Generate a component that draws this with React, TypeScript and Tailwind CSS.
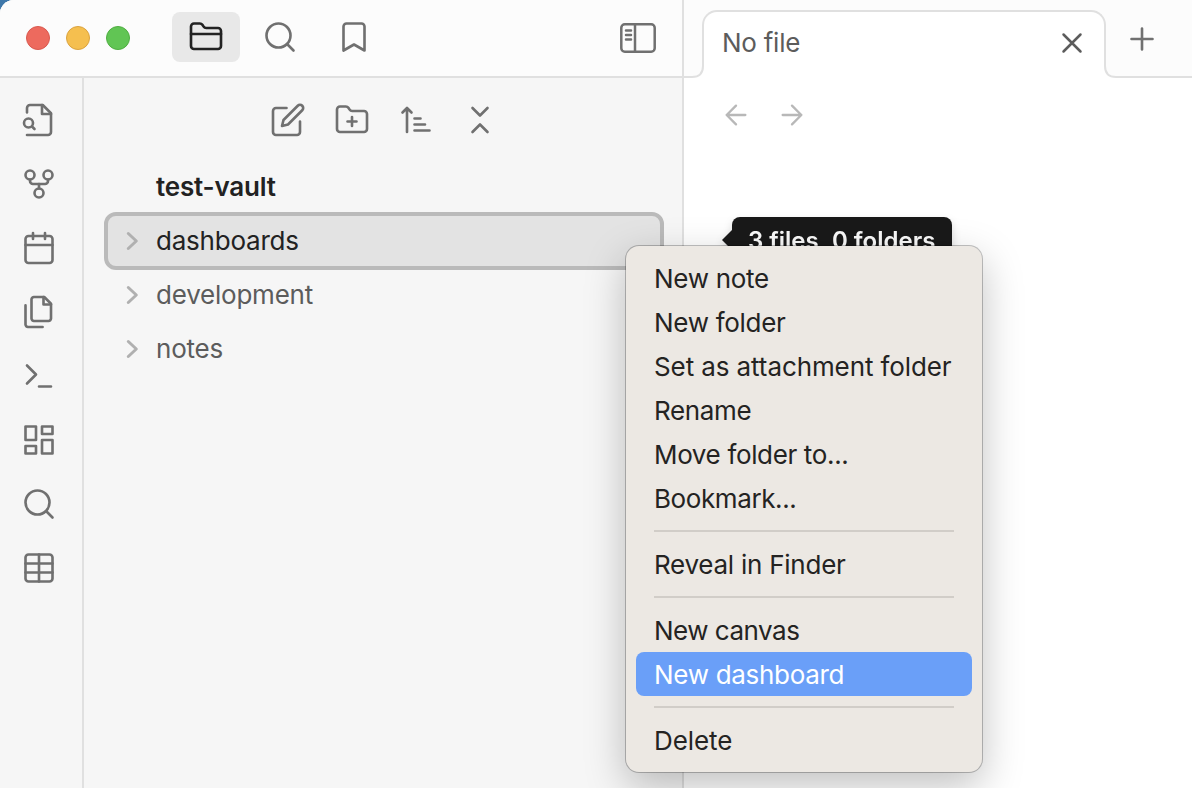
import type { ReactNode } from "react";

type IconProps = { children: ReactNode; className?: string };

function Icon({ children, className = "size-9" }: IconProps) {
  return (
    <svg
      viewBox="0 0 24 24"
      fill="none"
      stroke="currentColor"
      strokeWidth={1.75}
      strokeLinecap="round"
      strokeLinejoin="round"
      className={`shrink-0 ${className}`}
    >
      {children}
    </svg>
  );
}

const SearchShape = (
  <>
    <circle cx="11" cy="11" r="8" />
    <path d="m21 21-4.3-4.3" />
  </>
);

const ribbon: { name: string; shape: ReactNode }[] = [
  {
    name: "switcher",
    shape: (
      <>
        <path d="M4 22h14a2 2 0 0 0 2-2V7.5L14.5 2H6a2 2 0 0 0-2 2v3" />
        <path d="M14 2v6h6" />
        <circle cx="5" cy="14" r="3" />
        <path d="m9 18-1.5-1.5" />
      </>
    ),
  },
  {
    name: "graph",
    shape: (
      <>
        <circle cx="12" cy="18" r="3" />
        <circle cx="6" cy="6" r="3" />
        <circle cx="18" cy="6" r="3" />
        <path d="M18 9v1a2 2 0 0 1-2 2H8a2 2 0 0 1-2-2V9" />
        <path d="M12 12v3" />
      </>
    ),
  },
  {
    name: "daily",
    shape: (
      <>
        <rect x="3" y="4" width="18" height="18" rx="2" />
        <path d="M16 2v4M8 2v4M3 10h18" />
      </>
    ),
  },
  {
    name: "templates",
    shape: (
      <>
        <path d="M15.5 2H8.6c-.4 0-.8.2-1.1.5-.3.3-.5.7-.5 1.1v12.8c0 .4.2.8.5 1.1.3.3.7.5 1.1.5h9.8c.4 0 .8-.2 1.1-.5.3-.3.5-.7.5-1.1V6.5L15.5 2z" />
        <path d="M3 7.6v12.8c0 .4.2.8.5 1.1.3.3.7.5 1.1.5h9.8" />
        <path d="M15 2v5h5" />
      </>
    ),
  },
  { name: "commands", shape: <path d="m4 17 6-6-6-6M12 19h8" /> },
  {
    name: "dashboard",
    shape: (
      <>
        <rect x="3" y="3" width="7" height="9" />
        <rect x="14" y="3" width="7" height="5" />
        <rect x="14" y="12" width="7" height="9" />
        <rect x="3" y="16" width="7" height="5" />
      </>
    ),
  },
  { name: "search", shape: SearchShape },
  {
    name: "table",
    shape: (
      <>
        <rect x="3" y="3" width="18" height="18" rx="2" />
        <path d="M3 9h18M3 15h18M12 3v18" />
      </>
    ),
  },
];

const tools: { name: string; shape: ReactNode }[] = [
  {
    name: "new-note",
    shape: (
      <>
        <path d="M11 4H4a2 2 0 0 0-2 2v14a2 2 0 0 0 2 2h14a2 2 0 0 0 2-2v-7" />
        <path d="M18.5 2.5a2.12 2.12 0 0 1 3 3L12 15l-4 1 1-4Z" />
      </>
    ),
  },
  {
    name: "new-folder",
    shape: (
      <>
        <path d="M4 20h16a2 2 0 0 0 2-2V8a2 2 0 0 0-2-2h-7.93a2 2 0 0 1-1.66-.9l-.82-1.2A2 2 0 0 0 7.93 3H4a2 2 0 0 0-2 2v13c0 1.1.9 2 2 2Z" />
        <path d="M12 10v6M9 13h6" />
      </>
    ),
  },
  { name: "sort", shape: <path d="M11 11h4M11 15h7M11 19h10M9 7 6 4 3 7M6 6v14" /> },
  { name: "collapse", shape: <path d="m7 20 5-5 5 5M7 4l5 5 5-5" /> },
];

const menuGroups: { label: string; tracking: string }[][] = [
  [
    { label: "New note", tracking: "tracking-[-0.3px]" },
    { label: "New folder", tracking: "tracking-[-0.3px]" },
    { label: "Set as attachment folder", tracking: "tracking-[-0.1px]" },
    { label: "Rename", tracking: "tracking-[-0.35px]" },
    { label: "Move folder to...", tracking: "tracking-[-0.35px]" },
    { label: "Bookmark...", tracking: "tracking-[-0.4px]" },
  ],
  [{ label: "Reveal in Finder", tracking: "tracking-[-0.25px]" }],
  [
    { label: "New canvas", tracking: "tracking-[-0.5px]" },
    { label: "New dashboard", tracking: "tracking-[-0.3px]" },
  ],
  [{ label: "Delete", tracking: "tracking-[-0.1px]" }],
];

function FolderRow({ label, active = false }: { label: string; active?: boolean }) {
  return (
    <div
      className={
        active
          ? "-my-0.5 flex h-[58px] items-center rounded-xl border-4 border-[#bababa] bg-[#e3e3e3] pl-[17px] text-[#222222]"
          : "flex h-[54px] items-center pl-[21px] text-[#5c5c5c]"
      }
    >
      <svg
        viewBox="0 0 14 20"
        fill="none"
        stroke="#b0b0b0"
        strokeWidth="3"
        strokeLinecap="round"
        strokeLinejoin="round"
        className="h-5 w-3.5 shrink-0"
      >
        <path d="m3.3 2.5 8 7.5-8 7.5" />
      </svg>
      <span className="ml-[17px] tracking-[-0.22px]">{label}</span>
    </div>
  );
}

function TitleBar() {
  return (
    <div className="flex h-[78px] shrink-0 border-b-2 border-[#e0e0e0] bg-[#fcfcfc] pl-[26px] pr-[26px]">
      <div className="flex h-[76px] items-center gap-4">
        <span className="size-6 rounded-full border border-[#d9594f] bg-[#ed6a5e]" />
        <span className="size-6 rounded-full border border-[#dba33f] bg-[#f5bf4f]" />
        <span className="size-6 rounded-full border border-[#4fae41] bg-[#61c554]" />
      </div>
      <div className="ml-[42px] mt-3 flex h-[50px] text-[#707070]">
        <div className="flex h-[50px] w-[68px] items-center justify-center rounded-lg bg-[#e8e8e8] text-[#222222]">
          <Icon>
            <path d="M20 20a2 2 0 0 0 2-2V8a2 2 0 0 0-2-2h-7.9a2 2 0 0 1-1.69-.9L9.6 3.9A2 2 0 0 0 7.93 3H4a2 2 0 0 0-2 2v13a2 2 0 0 0 2 2Z" />
            <path d="M2 10h20" />
          </Icon>
        </div>
        <div className="ml-1.5 flex w-[68px] items-center justify-center">
          <Icon>{SearchShape}</Icon>
        </div>
        <div className="ml-1.5 flex w-[68px] items-center justify-center">
          <Icon>
            <path d="m19 21-7-4-7 4V5a2 2 0 0 1 2-2h10a2 2 0 0 1 2 2v16z" />
          </Icon>
        </div>
      </div>
      <svg
        viewBox="0 0 36 30"
        fill="none"
        stroke="#707070"
        strokeWidth="2.5"
        strokeLinecap="round"
        className="ml-auto mt-[23px] h-[30px] w-9"
      >
        <rect x="1.3" y="1.3" width="33.4" height="27.4" rx="3.5" />
        <path d="M15 1.3v27.4M6 7.5h5M6 12h5M6 16.5h5" />
      </svg>
    </div>
  );
}

function Workspace() {
  return (
    <main className="flex min-w-0 flex-1 flex-col bg-white">
      <div className="flex h-[78px] shrink-0">
        <div className="w-2 border-b-2 border-[#e0e0e0] bg-[#fcfcfc]" />
        <div className="flex w-[424px] flex-col">
          <div className="h-[66px] bg-[#fcfcfc] px-2.5 pt-2.5">
            <div className="flex h-14 items-start rounded-t-[15px] border-x-2 border-t-2 border-[#e0e0e0] bg-white pl-[18px] pr-[15px]">
              <span className="mt-3 text-[26px] leading-[38px] tracking-[-0.25px] text-[#5c5c5c]">
                No file
              </span>
              <Icon className="ml-auto mt-3.5 size-[34px] text-[#5c5c5c]">
                <path d="M18 6 6 18M6 6l12 12" />
              </Icon>
            </div>
          </div>
          <div className="flex h-3 justify-between">
            <svg viewBox="0 0 12 12" className="size-3">
              <path d="M0 0H11C11 7 7 11 0 11Z" fill="#fcfcfc" />
              <path d="M11 0C11 7 7 11 0 11" fill="none" stroke="#e0e0e0" strokeWidth="2" />
            </svg>
            <svg viewBox="0 0 12 12" className="size-3">
              <path d="M12 0H1C1 7 5 11 12 11Z" fill="#fcfcfc" />
              <path d="M1 0C1 7 5 11 12 11" fill="none" stroke="#e0e0e0" strokeWidth="2" />
            </svg>
          </div>
        </div>
        <div className="flex-1 border-b-2 border-[#e0e0e0] bg-[#fcfcfc] pl-2 pt-[21px] text-[#707070]">
          <Icon>
            <path d="M5 12h14M12 5v14" />
          </Icon>
        </div>
      </div>
      <div className="ml-9 mt-[21px] flex gap-6 text-[#b8b8b8]">
        <Icon className="size-8">
          <path d="m12 19-7-7 7-7M19 12H5" />
        </Icon>
        <Icon className="size-8">
          <path d="M5 12h14M12 5l7 7-7 7" />
        </Icon>
      </div>
    </main>
  );
}

function ContextMenu() {
  return (
    <div className="absolute left-[626px] top-[246px] flex w-[356px] flex-col rounded-[13px] bg-[#ece8e3] p-2.5 text-[26px] text-[#242322] shadow-[0_0_0_1px_rgba(0,0,0,0.24),0_14px_40px_rgba(0,0,0,0.25)]">
      {menuGroups.map((group, i) => (
        <div key={group[0].label}>
          {i > 0 && <div className="mx-[18px] my-2.5 h-0.5 bg-[#d1cdc8]" />}
          {group.map((item) => (
            <div
              key={item.label}
              className={`flex h-11 items-center whitespace-nowrap px-[18px] ${item.tracking} ${
                item.label === "New dashboard" ? "rounded-lg bg-[#6a9ff8] text-white" : ""
              }`}
            >
              {item.label}
            </div>
          ))}
        </div>
      ))}
    </div>
  );
}

export default function App() {
  return (
    <div className="h-[788px] w-[1192px] overflow-hidden bg-[#3f78aa] font-['Inter',sans-serif]">
      <div className="relative flex h-full overflow-hidden rounded-tl-[14px] bg-white">
        <div className="flex w-[684px] shrink-0 flex-col border-r-2 border-[#e0e0e0] bg-[#f6f6f6]">
          <TitleBar />
          <div className="flex flex-1">
            <nav className="flex w-[84px] flex-col gap-7 border-r-2 border-[#e0e0e0] pl-[21px] pt-6 text-[#707070]">
              {ribbon.map((item) => (
                <Icon key={item.name}>{item.shape}</Icon>
              ))}
            </nav>
            <section className="flex flex-1 flex-col pl-5 pr-[18px] pt-6 text-[26px] leading-[38px]">
              <div className="flex justify-center gap-7 text-[#707070]">
                {tools.map((tool) => (
                  <Icon key={tool.name}>{tool.shape}</Icon>
                ))}
              </div>
              <div className="mt-[22px] flex h-[54px] items-center pl-[52px] font-semibold tracking-[-0.2px] text-[#222222]">
                test-vault
              </div>
              <FolderRow label="dashboards" active />
              <FolderRow label="development" />
              <FolderRow label="notes" />
            </section>
          </div>
        </div>
        <Workspace />
        <div className="absolute left-[722px] top-[217px] flex items-center drop-shadow-lg">
          <svg viewBox="0 0 10 20" className="h-5 w-2.5">
            <path d="M10 0 0 10l10 10Z" fill="#191919" />
          </svg>
          <div className="flex h-[46px] w-[220px] items-center whitespace-nowrap rounded-lg bg-[#191919] pl-4 pt-0.5 text-[24px] font-semibold text-[#fafafa]">
            3 files, 0 folders
          </div>
        </div>
        <ContextMenu />
      </div>
    </div>
  );
}
